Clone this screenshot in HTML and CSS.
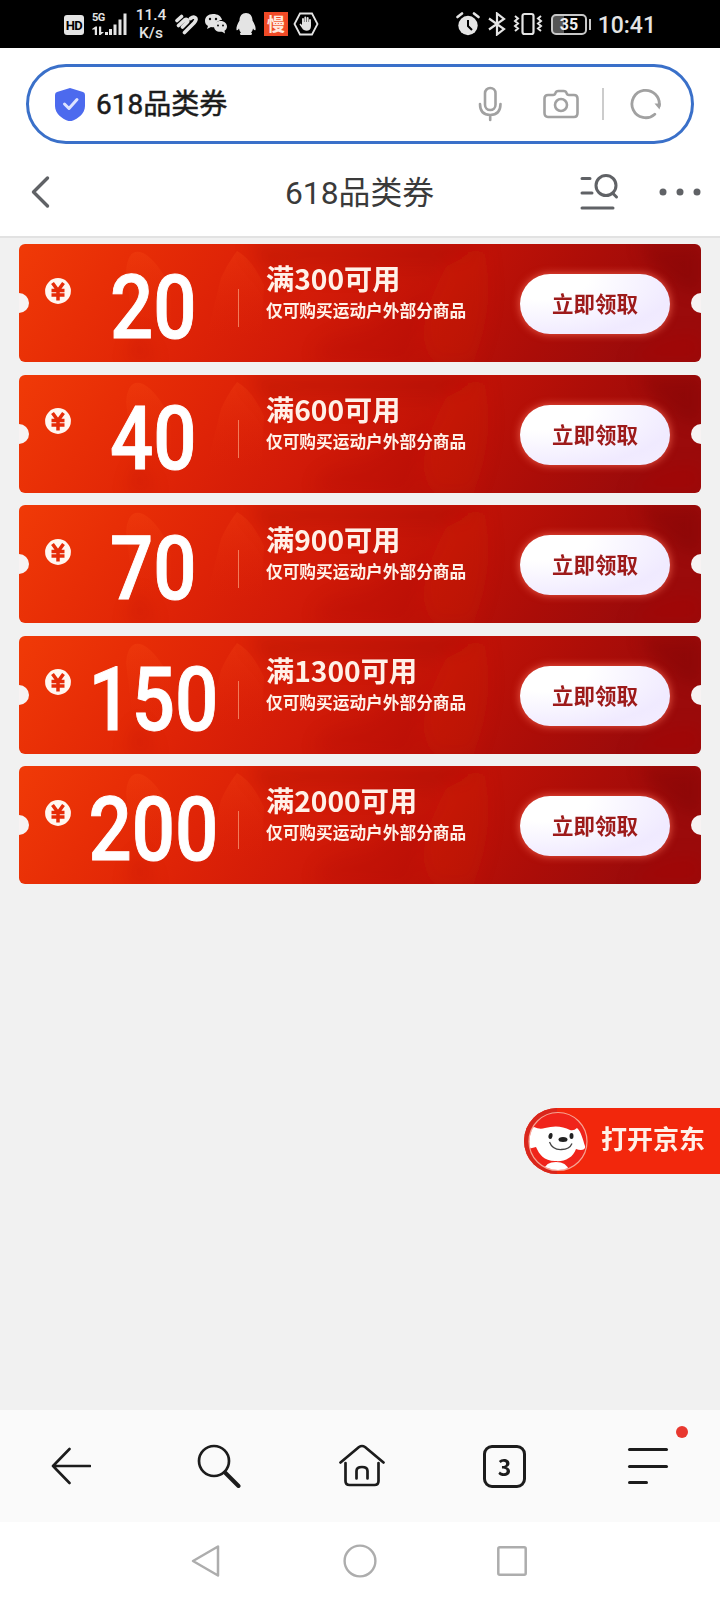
FILE: index.html
```html
<!DOCTYPE html>
<html lang="zh-CN">
<head>
<meta charset="utf-8">
<title>618品类券</title>
<link rel="stylesheet" href="styles.css">
</head>
<body>
<header class="status">
  <div class="hd">HD</div>
  <div class="signal">
    <span class="net">5G</span>
    <svg width="36" height="24" viewBox="0 0 36 24" fill="#e4e4e4"><path d="M0 17l3.500-2.500H5V23H2.800v-5.500H0zM7 14.500h2.200V20H12L8.500 23H7zM13 20h3v3h-3zM17 17h3v6h-3zM21.500 12.500h3V23h-3zM26.500 7.500h3V23h-3zM31.500 1.500h3V23h-3z"/></svg>
  </div>
  <div class="speed">11.4<br>K/s</div>
  <svg class="i-strip" width="24" height="24" viewBox="0 0 24 24" fill="none" stroke="#e4e4e4" stroke-width="3.600" stroke-linecap="round" stroke-linejoin="round"><path d="M3 8.500L7.500 4.500M4.500 13.500l6-5.500q2-1.500 3 0t-1 3l-4 4M10.500 20.500l9.500-9.500q3.500-4 1-5.500-2-1-4.500 1"/></svg>
  <svg class="i-wechat" width="24" height="24" viewBox="0 0 24 24"><path fill="#e4e4e4" d="M9 2c-5 0-8 3-8 7 0 2 1 4 3 5l-1 3 4-2c1 .4 3 .4 4 0 0-5 4-7 7-7-1-4-4-6-9-6z"/><path fill="#e4e4e4" d="M16.500 9c4 0 6.500 2.500 6.500 5.500 0 2-1 3.200-2.500 4.200l.5 2.800-3-1.800c-5 .8-8-2-8-5.200S12.500 9 16.500 9z"/><g fill="#111"><circle cx="6" cy="7" r="1.200"/><circle cx="12" cy="7" r="1.200"/><circle cx="14" cy="13.500" r="1"/><circle cx="19" cy="13.500" r="1"/></g></svg>
  <svg class="i-qq" width="22" height="24" viewBox="0 0 22 24" fill="#e4e4e4"><path d="M11 1c-4 0-6.500 3-6.500 7.500C2.500 12 1 15 1.500 18c.8.800 2-.5 2.500-1.500.3 2 1 3 2 4-1.500.7-1.500 2.500 1 2.500h8c2.500 0 2.500-1.800 1-2.500 1-1 1.700-2 2-4 .5 1 1.700 2.300 2.500 1.500.5-3-1-6-3-9.500C17.500 4 15 1 11 1z"/></svg>
  <div class="man">慢</div>
  <svg class="i-hex" width="26" height="24" viewBox="0 0 26 24"><path d="M7 1.500h12L24.500 12 19 22.500H7L1.500 12z" fill="none" stroke="#e4e4e4" stroke-width="1.800"/><path d="M10 11V7M12.300 11V5.500M14.700 11V6M17 12V8" stroke="#e4e4e4" stroke-width="1.900" stroke-linecap="round"/><path d="M9 10h9v4c0 6-7 6-9 2l-2.500-3.500 1-1L9 13z" fill="#e4e4e4"/></svg>
  <span class="grow"></span>
  <svg class="i-alarm" width="24" height="24" viewBox="0 0 24 24"><circle cx="12" cy="13.500" r="9.700" fill="#e4e4e4"/><path d="M1.500 5L6 1.500M22.500 5L18 1.500" stroke="#e4e4e4" stroke-width="2.600" stroke-linecap="round"/><path d="M12 8v6l4 4" stroke="#000" stroke-width="2" fill="none"/></svg>
  <svg class="i-bt" width="20" height="24" viewBox="0 0 20 24" fill="none" stroke="#e4e4e4" stroke-width="2.200"><path d="M2 6.500L17 17l-7 5.500v-21L17 7 2 17.500"/></svg>
  <svg class="i-vib" width="30" height="24" viewBox="0 0 30 24" fill="none" stroke="#e4e4e4"><rect x="9.500" y="2" width="11" height="20" rx="2" stroke-width="2.200"/><path stroke-width="2" d="M2 4l3 2.500L2 9l3 2.500L2 14l3 2.500L2 19M28 4l-3 2.500L28 9l-3 2.500 3 2.500-3 2.500 3 2.500"/></svg>
  <div class="battery">35</div><i class="cap"></i>
  <span class="time">10:41</span>
</header>

<div class="top">
  <div class="search">
    <svg class="i-shield" width="32" height="34" viewBox="0 0 32 34"><path d="M16 1l13 4q2 .5 2 3v11c0 8-8 13-12 14.500q-3 1-6 0C9 32 1 27 1 19V8q0-2.500 2-3z" fill="#4c6aee"/><path d="M10.500 17l4.500 4.500 8-9" fill="none" stroke="#dde3ff" stroke-width="3" stroke-linecap="round" stroke-linejoin="round"/></svg>
    <span class="query">618品类券</span>
    <span class="grow"></span>
    <svg class="i-mic" width="24" height="36" viewBox="0 0 24 36" fill="none" stroke="#a1a1a1" stroke-width="2.600" stroke-linecap="round"><rect x="7" y="2" width="10.500" height="22" rx="5.200"/><path d="M2 18q0 11 10.200 11T22.500 18M12.200 29v5"/></svg>
    <svg class="i-cam" width="36" height="30" viewBox="0 0 36 30" fill="none" stroke="#a1a1a1" stroke-width="2.600" stroke-linejoin="round"><path d="M5 6h5q2 0 2.500-2t3-2h5q2.500 0 3 2T26 6h5q3.500 0 3.500 3.500v14.500q0 4-3.500 4H5q-3.500 0-3.500-4V9.500Q1.500 6 5 6z"/><circle cx="18" cy="16" r="6"/></svg>
    <i class="sep"></i>
    <svg class="i-reload" width="32" height="32" viewBox="0 0 32 32"><path d="M24.800 26.200A13.700 13.700 0 1 1 29.200 18" fill="none" stroke="#a1a1a1" stroke-width="2.800" stroke-linecap="round"/><path d="M24.500 15.500h6.500l-1.500 6z" fill="#a1a1a1"/></svg>
  </div>
  <div class="nav">
    <svg class="i-back" width="20" height="34" viewBox="0 0 20 34" fill="none" stroke="#606266" stroke-width="3.400" stroke-linecap="round" stroke-linejoin="round"><path d="M16.500 3L2.500 17l14 14"/></svg>
    <h1>618品类券</h1>
    <svg class="i-find" width="40" height="36" viewBox="0 0 40 36" fill="none" stroke="#606266" stroke-width="3" stroke-linecap="round"><path d="M3 4.500h8M3 19h10M3 34h31M33.500 19l4 4"/><circle cx="27" cy="11.500" r="10"/></svg>
    <svg class="i-more" width="42" height="8" viewBox="0 0 42 8" fill="#606266"><circle cx="4" cy="4" r="3.500"/><circle cx="21" cy="4" r="3.500"/><circle cx="38" cy="4" r="3.500"/></svg>
  </div>
</div>

<svg class="defs" width="0" height="0">
  <defs>
    <linearGradient id="base" x1="0" y1="0" x2="1" y2=".12"><stop offset="0" stop-color="#f03a07"/><stop offset=".16" stop-color="#e82e06"/><stop offset=".33" stop-color="#de2307"/><stop offset=".5" stop-color="#d11a08"/><stop offset=".68" stop-color="#bf1207"/><stop offset=".85" stop-color="#ab0d08"/><stop offset="1" stop-color="#9b0b0b"/></linearGradient>
    <linearGradient id="petal" x1="0" y1="0" x2="0" y2="1"><stop offset="0" stop-color="#ff5a1c" stop-opacity=".2"/><stop offset=".8" stop-color="#e62a08" stop-opacity="0"/></linearGradient>
    <linearGradient id="dim" x1="0" y1="0" x2="0" y2="1"><stop offset="0" stop-color="#7c0707" stop-opacity=".22"/><stop offset="1" stop-color="#7c0707" stop-opacity="0"/></linearGradient>
    <filter id="soft" x="-20%" y="-20%" width="140%" height="140%"><feGaussianBlur stdDeviation="8"/></filter>
  </defs>
  <symbol id="flame" viewBox="0 0 683 118" preserveAspectRatio="none">
    <rect width="683" height="118" fill="url(#base)"/>
    <path d="M107 27q2-24 17-18 14 7 27 34l3 75h-36z" fill="url(#petal)"/>
    <path d="M202 34q6-14 16-27 15 8 27 34l-4 77h-60z" fill="url(#petal)"/>
    <g filter="url(#soft)">
      <path d="M230 0h240l-65 34-80 6-75-12z" fill="url(#dim)"/>
      <path d="M220 8q30 12 42 50l12-32zM300 118q-15-25 50-34l60-38-20 72zM108 118q2-25 14-34l16 34z" fill="#a90b05" opacity=".14"/>
      <path d="M415 118q-30-30 25-118l24 0q15 58-9 118z" fill="#dc1c08" opacity=".16"/>
      <path d="M620 0h63v50q-38-5-63-50z" fill="#6f0808" opacity=".3"/>
      <path d="M610 118q30-35 73-28v28z" fill="#a80d0c" opacity=".35"/>
    </g>
  </symbol>
  <symbol id="yen" viewBox="0 0 26 26"><circle cx="13" cy="13" r="12.900" fill="#fff6f0"/><path d="M7.500 5l5.500 7.500L18.500 5M6.500 12.500h13M6.500 17h13M13 12v10.500" fill="none" stroke="#e52b08" stroke-width="3.500"/></symbol>
</svg>

<main>
  <section class="coupon"><svg class="art"><use href="#flame"/></svg><svg class="yen"><use href="#yen"/></svg><div class="amount"><b>20</b></div><i class="rule"></i><div class="info"><h2>满300可用</h2><p>仅可购买运动户外部分商品</p></div><button>立即领取</button></section>
  <section class="coupon"><svg class="art"><use href="#flame"/></svg><svg class="yen"><use href="#yen"/></svg><div class="amount"><b>40</b></div><i class="rule"></i><div class="info"><h2>满600可用</h2><p>仅可购买运动户外部分商品</p></div><button>立即领取</button></section>
  <section class="coupon"><svg class="art"><use href="#flame"/></svg><svg class="yen"><use href="#yen"/></svg><div class="amount"><b>70</b></div><i class="rule"></i><div class="info"><h2>满900可用</h2><p>仅可购买运动户外部分商品</p></div><button>立即领取</button></section>
  <section class="coupon"><svg class="art"><use href="#flame"/></svg><svg class="yen"><use href="#yen"/></svg><div class="amount"><b>150</b></div><i class="rule"></i><div class="info"><h2>满1300可用</h2><p>仅可购买运动户外部分商品</p></div><button>立即领取</button></section>
  <section class="coupon"><svg class="art"><use href="#flame"/></svg><svg class="yen"><use href="#yen"/></svg><div class="amount"><b>200</b></div><i class="rule"></i><div class="info"><h2>满2000可用</h2><p>仅可购买运动户外部分商品</p></div><button>立即领取</button></section>
  <a class="open">
    <svg width="66" height="66" viewBox="0 0 66 66"><defs><clipPath id="face"><circle cx="34" cy="33.500" r="28.500"/></clipPath></defs><circle cx="33" cy="33" r="33" fill="#d9261c"/><path d="M33 0h33v66H33z" fill="#f2270c"/><circle cx="34" cy="33.500" r="29" fill="#f0241b" stroke="#f7a493" stroke-width="1.200"/><g clip-path="url(#face)" fill="#fff"><path d="M10 19q6 3 11 1 14-4 25 2 4 1 7-2c4 3 6 12 8 18 1 4-4 5-9 3-3 9-12 13-21 12-11 0-16-7-19-14L4 41V22z"/><path d="M20 66q-1-12 12-12t13 12z"/></g><ellipse cx="26.500" cy="28" rx="2" ry="3" fill="#222" transform="rotate(12 26.500 28)"/><ellipse cx="47.500" cy="28" rx="2" ry="3" fill="#222"/><ellipse cx="39" cy="31.500" rx="4.500" ry="2.500" fill="#222"/><path d="M25.500 34q3 8 12 7.500 8 0 10.500-6" fill="none" stroke="#444" stroke-width="1.300"/></svg>
    <span>打开京东</span>
  </a>
</main>

<nav class="toolbar">
  <svg class="t-back" width="40" height="40" viewBox="0 0 40 40" fill="none" stroke="#1c1c1c" stroke-width="2.600" stroke-linecap="round" stroke-linejoin="round"><path d="M18.500 3L2 20l16.500 17M2 20h37"/></svg>
  <svg class="t-search" width="44" height="44" viewBox="0 0 44 44" fill="none" stroke="#1c1c1c" stroke-linecap="round"><circle cx="17" cy="17" r="15" stroke-width="2.700"/><path d="M28 28.500L41.500 42" stroke-width="4"/></svg>
  <svg class="t-home" width="48" height="44" viewBox="0 0 48 44" fill="none" stroke="#1c1c1c" stroke-width="2.700" stroke-linecap="round" stroke-linejoin="round"><path d="M2.500 18.500L21 3q3-2 6 0l18.500 15.500M7.500 19v18q0 4 4 4h25q4 0 4-4V19"/><path d="M18.500 34.500v-7.500q0-4 5.500-4t5.500 4v7.500"/></svg>
  <div class="tabs">3</div>
  <div class="menu"><i></i><i></i><i></i></div>
</nav>
<footer>
  <svg width="30" height="34" viewBox="0 0 30 34" fill="none" stroke="#adadad" stroke-width="2.500" stroke-linejoin="round"><path d="M27 2.500v29L2 17z"/></svg>
  <svg class="f-home" width="34" height="34" viewBox="0 0 34 34" fill="none" stroke="#adadad" stroke-width="2.400"><circle cx="17" cy="17" r="15.400"/></svg>
  <svg class="f-recent" width="30" height="30" viewBox="0 0 30 30" fill="none" stroke="#adadad" stroke-width="2.500"><rect x="1.300" y="1.300" width="27.400" height="27.400" rx="1.500"/></svg>
</footer>
</body>
</html>
```
FILE: styles.css
```css
* { box-sizing: border-box; }
body { margin: 0; width: 720px; height: 1600px; display: flex; flex-direction: column; overflow: hidden; background: #f1f1f1; font-family: Roboto, "Noto Sans CJK SC", sans-serif; }
svg { display: block; flex: none; }
h1, h2, p { margin: 0; }
.grow { flex: 1; }
.defs { position: absolute; }

.status { height: 48px; flex: none; background: #000; color: #e4e4e4; display: flex; align-items: center; padding: 0 64px 0 64px; }
.hd { width: 20px; height: 20px; margin-top: 2px; border-radius: 3px; background: #e4e4e4; color: #000; font: 700 13px/21px Roboto, sans-serif; text-align: center; letter-spacing: -.5px; }
.signal { position: relative; width: 36px; height: 24px; margin-left: 8px; }
.net { position: absolute; left: 0; top: 0; font: 700 11px/11px Roboto, sans-serif; letter-spacing: -.5px; }
.speed { width: 34px; margin-left: 6px; font: 500 15.500px/18px Roboto, sans-serif; text-align: center; white-space: nowrap; }
.i-strip { margin-left: 6px; }
.i-wechat { margin-left: 6px; }
.i-qq { margin-left: 7px; }
.man { width: 24px; height: 24px; margin-left: 7px; background: #f04a26; color: #ffe9df; font: 700 18px/23px "Noto Sans CJK SC", sans-serif; text-align: center; }
.i-hex { margin-left: 5px; }
.i-bt { margin-left: 7px; }
.i-vib { margin-left: 6px; }
.battery { width: 36px; height: 21px; margin-left: 8px; border: 2px solid #c8c8c8; border-radius: 5px; background: linear-gradient(90deg, #555 35%, #000 35%); color: #eee; font: 700 16px/18px Roboto, sans-serif; text-align: center; }
.cap { width: 2px; height: 11px; margin-left: 2px; background: #c8c8c8; }
.time { width: 65px; font: 500 23px/48px Roboto, sans-serif; text-align: right; white-space: nowrap; padding-top: 3px; }

.top { height: 190px; flex: none; padding-top: 16px; background: #fff; border-bottom: 2px solid #e2e2e2; }
.search { width: 668px; height: 80px; margin-left: 26px; border: 3px solid #3a70c9; border-radius: 40px; display: flex; align-items: center; padding: 0 29px 0 25px; }
.query { margin-left: 10px; padding-top: 2px; font-size: 28px; font-weight: 400; -webkit-text-stroke: .5px #1c1c1c; line-height: 40px; color: #1c1c1c; }
.i-cam { margin-left: 41px; }
.sep { width: 2px; height: 32px; margin-left: 23px; background: #ccc; }
.i-reload { margin-left: 26px; }
.nav { height: 92px; display: flex; align-items: center; padding: 4px 19px 0 31px; }
.nav h1 { flex: 1; text-align: center; font-size: 31.8px; line-height: 46px; font-weight: 400; color: #3a3a3a; padding-left: 89px; padding-top: 1px; }
.i-find { margin-right: 40px; }

main { height: 1172px; flex: none; padding: 6px 0 0 19px; display: flex; flex-direction: column; gap: 12.5px; }
.coupon { position: relative; width: 682px; height: 118px; flex: none; border-radius: 6px; overflow: hidden; display: flex; }
.art { position: absolute; left: 0; top: 0; width: 683px; height: 118px; z-index: -1; }
.coupon::before, .coupon::after { content: ""; position: absolute; top: 49px; width: 20px; height: 20px; border-radius: 50%; background: #f7f3f3; }
.coupon::before { left: -10px; }
.coupon::after { right: -10px; }
.yen { width: 26px; height: 26px; margin: 33.500px 0 0 26px; }
.amount { width: 160px; height: 118px; margin-left: 2px; display: flex; justify-content: center; color: #fff; }
.amount b { font: 500 88.500px/128px Roboto, sans-serif; -webkit-text-stroke: 1px #fff; transform: scaleX(.86); white-space: nowrap; }
.rule { width: 1px; height: 38px; margin: 45px 0 0 5px; background: #f27b5a; }
.info { width: 254px; margin-left: 27px; padding-top: 15px; color: #fff1e8; font-family: "Noto Sans CJK SC", sans-serif; white-space: nowrap; }
.info h2 { font-size: 28.2px; line-height: 38px; font-weight: 700; }
.info p { margin-top: 1px; font-size: 16.700px; line-height: 24px; font-weight: 700; }
button { width: 150px; height: 60px; margin-top: 30px; padding: 0 0 2px; border: 0; border-radius: 30px; background: radial-gradient(ellipse at 15% 10%, #fff 25%, #f0eaff 75%, #f4eeff); box-shadow: 0 0 9px 0 #f0604c; color: #9d1a1a; font: 700 21.500px/58px "Noto Sans CJK SC", sans-serif; }
.open { width: 196px; height: 66px; margin: 211.500px 0 0 505px; display: flex; border-radius: 33px 0 0 33px; background: #f2270c; color: #fff1e8; }
.open span { margin-left: 11px; font: 700 26px/60px "Noto Sans CJK SC", sans-serif; white-space: nowrap; }

.toolbar { height: 112px; flex: none; background: #fafafa; display: flex; align-items: center; padding-left: 51px; }
.t-search { margin-left: 106px; }
.t-home { margin-left: 97px; }
.tabs { width: 43px; height: 43px; margin-left: 97px; border: 3px solid #1c1c1c; border-radius: 9px; font: 700 23px/36px "Noto Sans CJK SC", sans-serif; color: #1c1c1c; text-align: center; }
.menu { position: relative; width: 40px; height: 36px; margin-left: 102px; display: flex; flex-direction: column; justify-content: space-between; }
.menu i { height: 3px; border-radius: 2px; background: #1c1c1c; }
.menu i:last-child { width: 20px; }
.menu::after { content: ""; position: absolute; right: -20px; top: -22px; width: 12px; height: 12px; border-radius: 50%; background: #e8382f; }
footer { flex: 1; background: #fff; display: flex; align-items: center; padding: 0 0 0 191px; }
.f-home { margin-left: 122px; }
.f-recent { margin-left: 120px; }
```
